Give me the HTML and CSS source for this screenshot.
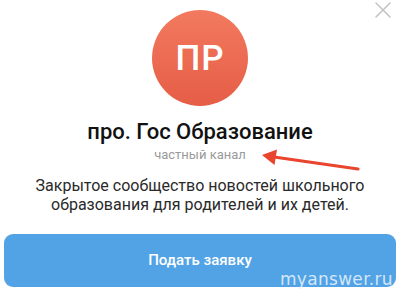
FILE: index.html
```html
<!DOCTYPE html>
<html lang="ru">
<head>
<meta charset="utf-8">
<link rel="stylesheet" href="styles.css">
</head>
<body>
<div class="screen">
  <svg class="close" width="18" height="18" viewBox="0 0 18 18"><path d="M2 2L16 16M16 2L2 16" stroke="#c4c4c4" stroke-width="1.6" stroke-linecap="round"/></svg>
  <div class="avatar"><span>ПР</span></div>
  <h1 class="title">про. Гос Образование</h1>
  <div class="subtitle">частный канал</div>
  <p class="desc">Закрытое сообщество новостей школьного<br>образования для родителей и их детей.</p>
  <div class="btn">Подать заявку</div>
  <svg class="arrow" width="100" height="24" viewBox="0 0 100 24"><path d="M14 9L98 21" stroke="#e8442e" stroke-width="3.2" stroke-linecap="round"/><path d="M2 7L17 1.5L14.5 17Z" fill="#e8442e"/></svg>
  <div class="watermark">myanswer.ru</div>
</div>
</body>
</html>
```
FILE: styles.css
```css
html, body { margin: 0; padding: 0; background: #fff; }
.screen {
  position: relative;
  width: 400px;
  height: 296px;
  overflow: hidden;
  display: flex;
  flex-direction: column;
  align-items: center;
  font-family: Roboto, "Noto Sans", sans-serif;
}
.close { position: absolute; left: 374px; top: 1px; }
.avatar {
  margin-top: 10px;
  width: 96px;
  height: 96px;
  border-radius: 50%;
  background: linear-gradient(#f27a5f, #e65d46);
  display: flex;
  align-items: center;
  justify-content: center;
}
.avatar span {
  color: #fff;
  font-size: 35px;
  font-weight: 500;
  letter-spacing: 1px;
  margin-top: 1px;
}
.title {
  margin: 13px 0 0;
  font-size: 22px;
  font-weight: 500;
  color: #111;
  line-height: 26px;
}
.subtitle {
  margin-top: 2px;
  font-size: 13px;
  color: #9a9a9a;
  line-height: 16px;
}
.desc {
  margin: 13px 0 0;
  text-align: center;
  font-size: 16px;
  line-height: 19px;
  color: #2a2a2a;
}
.btn {
  margin-top: 20px;
  width: 392px;
  height: 53px;
  border-radius: 9px;
  background: #51a3e6;
  color: #fff;
  font-size: 15px;
  font-weight: 500;
  display: flex;
  align-items: center;
  justify-content: center;
  padding-bottom: 2px;
  box-sizing: border-box;
}
.arrow { position: absolute; left: 260px; top: 148px; }
.watermark {
  position: absolute;
  left: 280px;
  top: 269px;
  font-family: "DejaVu Sans", sans-serif;
  font-size: 17px;
  color: rgba(235, 244, 252, 0.85);
  letter-spacing: 0.3px;
}
```
